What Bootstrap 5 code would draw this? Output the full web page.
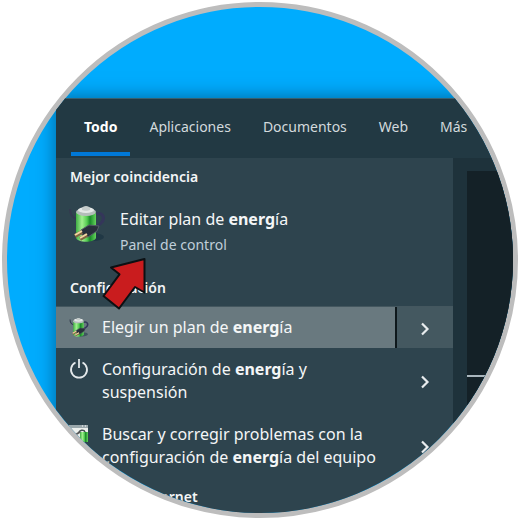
<!DOCTYPE html>
<html lang="es">
<head>
<meta charset="utf-8">
<meta name="viewport" content="width=device-width, initial-scale=1">
<title>Editar plan de energía</title>
<link href="https://cdn.jsdelivr.net/npm/bootstrap@5.3.0/dist/css/bootstrap.min.css" rel="stylesheet">
<style>
body { font-family: "Noto Sans", "Open Sans", sans-serif; background: #fff; }
.page { padding: 2px; }
.lens { aspect-ratio: 1; border: 5px solid #bdbdbd; border-radius: 50%; background: #00acfe; padding: 91px 0 0 49px; }
.search-window { background: #2e444e; box-shadow: 0 0 18px rgba(0, 40, 70, .55); color: #f4f6f7; }
.tabs { background: #223943; height: 60px; padding-left: 15px; border-top: 1px solid #37606f; gap: 6px; }
.tab { font-size: 14px; color: #d3dadd; padding: 2px 13px 0; border: 0; border-bottom: 4px solid transparent; background: none; margin-bottom: 2px; }
.tab.current { color: #fff; font-weight: 700; border-bottom-color: #0078d7; }
.heading { font-size: 14px; line-height: 20px; font-weight: 600; padding: 9px 14px 8px; margin: 0; }
.best { background: #205478; padding: 11px 14px 11px 12px; gap: 14px; }
.entry { font-size: 16px; line-height: 23px; }
.best-title { font-size: 16px; line-height: 26px; }
.best-sub { font-size: 14px; line-height: 26px; color: #c0cfda; }
.plain { border: 0; color: inherit; text-align: left; background: none; }
.entry { padding: 9px 8px 9px 13px; gap: 13px; }
.entry-tall { padding-top: 10px; }
.more { width: 56px; }
.hovered .entry { background: #69797f; border-right: 2px solid #0e181c; }
.hovered .more { background: #445860; }
.hovered { border-top: 1px solid #44575f; }
b { font-weight: 700; }
.preview { width: 60px; background: #1e323b; padding: 13px 0 0 14px; }
.preview-card { background: #142127; padding-top: 204px; }
.preview-line { border-top: 2px solid #a9b6bd; }
.pointer { left: 94px; top: 249px; }
</style>
<script src="https://cdn.jsdelivr.net/npm/bootstrap@5.3.0/dist/js/bootstrap.bundle.min.js"></script>
</head>
<body>
<svg class="position-absolute" width="0" height="0" aria-hidden="true">
  <defs>
    <linearGradient id="cell"><stop offset="0" stop-color="#3fae45"/><stop offset=".3" stop-color="#a0f08e"/><stop offset=".55" stop-color="#55cc52"/><stop offset=".7" stop-color="#188b29"/><stop offset="1" stop-color="#66d45c"/></linearGradient>
    <symbol id="battery" viewBox="0 0 38 38">
      <ellipse cx="25" cy="31" rx="11" ry="4" fill="#102b3b" opacity=".45"/>
      <path d="M2 3C2 9 5 12 9 13" fill="none" stroke="#34384f" stroke-width="2"/>
      <path d="M8 6v26c2 5 18 5 20 0V6z" fill="url(#cell)"/>
      <ellipse cx="18" cy="6" rx="10" ry="4" fill="#b4bdba"/>
      <ellipse cx="18" cy="4" rx="8" ry="3" fill="#e4e8e7"/>
      <path d="M14 3c0-4 8-4 8 0v1c-2 1-6 1-8 0z" fill="#c5cccb"/>
      <path d="M28 8c7-2 9 4 6 8-2 3-5 4-8 6" fill="none" stroke="#34365a" stroke-width="3"/>
      <path d="M13 24l8-5 10 1-2 5-9 6-6-2z" fill="#28303b" stroke="#555d68"/>
      <path d="M7 30l7-4M12 33l7-4" stroke="#806642" stroke-width="4"/>
      <path d="M7 29l7-4M12 32l7-4" stroke="#f1d6a3" stroke-width="2"/>
    </symbol>
    <symbol id="chevron" viewBox="0 0 10 14"><path d="M2 1.500L7.500 7 2 12.500" fill="none" stroke="#e8ecee" stroke-width="2.200"/></symbol>
  </defs>
</svg>
<main class="page">
  <div class="lens position-relative overflow-hidden d-flex flex-column">
    <section class="search-window flex-grow-1 d-flex flex-column">
      <nav class="tabs d-flex flex-shrink-0" aria-label="Filtros">
        <button class="tab current" type="button">Todo</button>
        <button class="tab" type="button">Aplicaciones</button>
        <button class="tab" type="button">Documentos</button>
        <button class="tab" type="button">Web</button>
        <button class="tab" type="button">Más</button>
      </nav>
      <div class="d-flex flex-grow-1">
        <div class="flex-grow-1">
          <h2 class="heading">Mejor coincidencia</h2>
          <button class="best plain w-100 d-flex align-items-start" type="button">
            <svg width="38" height="38" aria-hidden="true"><use href="#battery"/></svg>
            <span>
              <span class="best-title d-block">Editar plan de <b>energ</b>ía</span>
              <span class="best-sub d-block">Panel de control</span>
            </span>
          </button>
          <h2 class="heading">Configuración</h2>
          <div class="hovered d-flex">
            <button class="entry plain flex-grow-1 d-flex align-items-center" type="button">
              <svg width="20" height="20" aria-hidden="true"><use href="#battery"/></svg>
              <span>Elegir un plan de <b>energ</b>ía</span>
            </button>
            <button class="more plain p-0 text-center" type="button" aria-label="Más opciones"><svg width="10" height="14"><use href="#chevron"/></svg></button>
          </div>
          <div class="d-flex">
            <button class="entry entry-tall plain flex-grow-1 d-flex align-items-start" type="button">
              <svg width="20" height="22" viewBox="0 0 20 22" aria-hidden="true"><path d="M6.500 4.500a8 8 0 1 0 7 0M10 1v9" fill="none" stroke="#e3e8ea" stroke-width="1.800"/></svg>
              <span>Configuración de <b>energ</b>ía y<br>suspensión</span>
            </button>
            <button class="more plain p-0 text-center" type="button" aria-label="Más opciones"><svg width="10" height="14"><use href="#chevron"/></svg></button>
          </div>
          <div class="d-flex">
            <button class="entry entry-tall plain flex-grow-1 d-flex align-items-start" type="button">
              <svg width="20" height="20" viewBox="0 0 20 20" aria-hidden="true"><path d="M0 2h19v16H0z" fill="#eef1ee"/><path d="M0 2h19v3H0z" fill="#9ba8ac"/><path d="M13 3h1M16 3h1" stroke="#fff"/><path d="M10 10c0-3 5-4 6-1" fill="none" stroke="#445052" stroke-width="1.500"/><path d="M11 9h8v10h-8z" fill="url(#cell)"/><path d="M6 12l5-3" stroke="#555" stroke-width="2"/></svg>
              <span>Buscar y corregir problemas con la<br>configuración de <b>energ</b>ía del equipo</span>
            </button>
            <button class="more plain p-0 text-center" type="button" aria-label="Más opciones"><svg width="10" height="14"><use href="#chevron"/></svg></button>
          </div>
          <h2 class="heading">Buscar en Internet</h2>
        </div>
        <aside class="preview flex-shrink-0 d-flex flex-column">
          <div class="preview-card flex-grow-1"><div class="preview-line"></div></div>
        </aside>
      </div>
    </section>
    <svg class="pointer position-absolute" width="48" height="56" viewBox="0 0 48 56" aria-hidden="true"><path d="M43.500 3L10 11.500l8.500 6.800L2.500 40 18 52.500 34 31l9.500 5.500z" fill="#c91c1e" stroke="#0c1013" stroke-width="2" stroke-linejoin="round"/></svg>
  </div>
</main>
</body>
</html>
